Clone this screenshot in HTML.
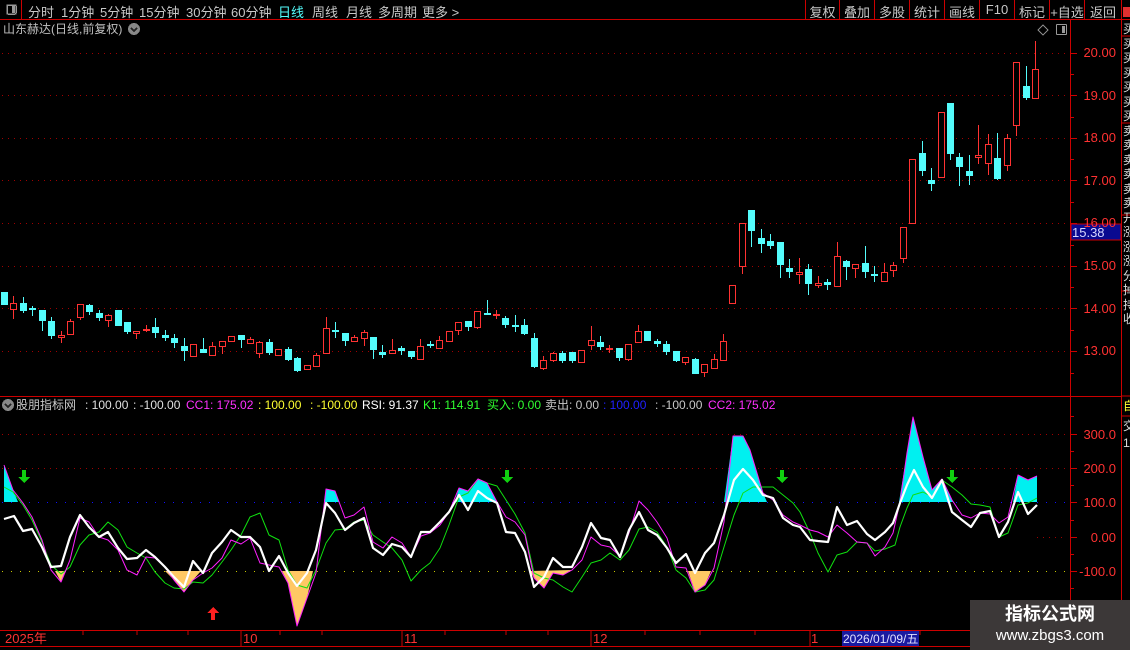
<!DOCTYPE html>
<html><head><meta charset="utf-8"><style>
body{margin:0;background:#000;width:1130px;height:650px;overflow:hidden;position:relative;font-family:"Liberation Sans","Noto Sans CJK SC",sans-serif;}
.t{position:absolute;white-space:nowrap;font-size:12px;line-height:14px}
.m{position:absolute;top:2px;font-size:13px;color:#c8c8c8;white-space:nowrap}
.b{position:absolute;top:2px;font-size:13px;color:#c8c8c8;text-align:center}
.pl{position:absolute;right:14px;font-size:13px;color:#ff3232;text-align:right}
</style></head><body>
<svg width="1130" height="650" style="position:absolute;left:0;top:0" shape-rendering="crispEdges">
<line x1="21.5" y1="0" x2="21.5" y2="19" stroke="#c00"/>
<rect x="7" y="5" width="9" height="9" fill="none" stroke="#999" stroke-width="1.5" rx="1"/>
<rect x="12" y="6" width="3" height="7" fill="#999"/>
<line x1="0" y1="19.5" x2="1130" y2="19.5" stroke="#c00"/>
<g stroke="#c00"><line x1="805.5" y1="0" x2="805.5" y2="19"/><line x1="839.5" y1="0" x2="839.5" y2="19"/><line x1="874.5" y1="0" x2="874.5" y2="19"/><line x1="909.5" y1="0" x2="909.5" y2="19"/><line x1="944.5" y1="0" x2="944.5" y2="19"/><line x1="979.5" y1="0" x2="979.5" y2="19"/><line x1="1014.5" y1="0" x2="1014.5" y2="19"/><line x1="1049.5" y1="0" x2="1049.5" y2="19"/><line x1="1084.5" y1="0" x2="1084.5" y2="19"/><line x1="1121.5" y1="0" x2="1121.5" y2="650"/></g>
<rect x="1123" y="7" width="7" height="10" fill="#e03030"/>
<line x1="1070.5" y1="20" x2="1070.5" y2="631" stroke="#c00"/>
<line x1="0" y1="396.5" x2="1121" y2="396.5" stroke="#c00"/>
<line x1="0" y1="630.5" x2="1121" y2="630.5" stroke="#c00"/>
<line x1="0" y1="646.5" x2="1121" y2="646.5" stroke="#c00"/>
<g stroke="#a00000" stroke-dasharray="1,5">
<line x1="2" y1="53.5" x2="1066" y2="53.5"/><line x1="2" y1="95.5" x2="1066" y2="95.5"/><line x1="2" y1="138.5" x2="1066" y2="138.5"/><line x1="2" y1="180.5" x2="1066" y2="180.5"/><line x1="2" y1="223.5" x2="1066" y2="223.5"/><line x1="2" y1="266.5" x2="1066" y2="266.5"/><line x1="2" y1="308.5" x2="1066" y2="308.5"/><line x1="2" y1="351.5" x2="1066" y2="351.5"/>
<line x1="2" y1="434.5" x2="1066" y2="434.5"/><line x1="2" y1="468.5" x2="1066" y2="468.5"/><line x1="1037" y1="537.5" x2="1066" y2="537.5"/>
</g>
<line x1="2" y1="502.5" x2="1066" y2="502.5" stroke="#1010ff" stroke-dasharray="1,8"/>
<line x1="2" y1="571.5" x2="1066" y2="571.5" stroke="#c8c800" stroke-dasharray="1,8"/>
<g stroke="#c00">
<path d="M1071 53.5h6M1071 95.5h6M1071 138.5h6M1071 180.5h6M1071 223.5h6M1071 266.5h6M1071 308.5h6M1071 351.5h6M1071 74.5h3M1071 117.5h3M1071 159.5h3M1071 202.5h3M1071 245.5h3M1071 287.5h3M1071 330.5h3M1071 373.5h3"/>
<path d="M1071 434.5h6M1071 468.5h6M1071 502.5h6M1071 537.5h6M1071 571.5h6M1071 451.5h3M1071 485.5h3M1071 520.5h3M1071 554.5h3M1071 588.5h3M1071 416.5h3M1071 605.5h3"/>
<path d="M83 631v4M137 631v4M188 631v4M241 631v15M280 631v4M322 631v4M402 631v15M445 631v4M506 631v4M548 631v4M591 631v15M645 631v4M700 631v4M755 631v4M810 631v15M870 631v4M920 631v4M1010 631v4"/>
</g>
<g stroke="#54fcfc" fill="none">
<path d="M4.5 292V305M23.5 297V313M32.5 306V316M42.5 310V331M51.5 317V339M89.5 304V315M99.5 310V321M118.5 310V326M127.5 322V334M155.5 318V338M165.5 330V341M174.5 334V348M184.5 338V361M203.5 338V353M241.5 335V348M269.5 339V355M288.5 347V361M297.5 357V372M335.5 322V338M345.5 333V346M373.5 337V359M382.5 345V358M401.5 346V355M411.5 351V359M430.5 341V348M468.5 321V331M487.5 300V314M505.5 316V328M515.5 315V332M524.5 319V335M534.5 333V368M562.5 351V363M572.5 352V363M600.5 336V350M619.5 348V361M647.5 331V341M657.5 339V347M666.5 341V355M676.5 351V362M695.5 358V374M751.5 210V247M761.5 229V253M770.5 234V249M780.5 242V278M789.5 259V278M808.5 264V295M827.5 279V290M846.5 260V280M865.5 246V278M874.5 266V282M922.5 141V176M931.5 168V191M950.5 103V160M959.5 153V186M969.5 155V185M997.5 133V180M1026.5 66V100"/>
</g>
<g fill="#54fcfc">
<rect x="1" y="292" width="7" height="13"/><rect x="20" y="303" width="7" height="8"/><rect x="29" y="308" width="7" height="2"/><rect x="39" y="310" width="7" height="11"/><rect x="48" y="321" width="7" height="15"/><rect x="86" y="305" width="7" height="7"/><rect x="96" y="313" width="7" height="5"/><rect x="115" y="310" width="7" height="16"/><rect x="124" y="322" width="7" height="10"/><rect x="152" y="327" width="7" height="6"/><rect x="162" y="335" width="7" height="3"/><rect x="171" y="338" width="7" height="5"/><rect x="181" y="346" width="7" height="5"/><rect x="200" y="349" width="7" height="4"/><rect x="238" y="335" width="7" height="5"/><rect x="266" y="342" width="7" height="11"/><rect x="285" y="349" width="7" height="11"/><rect x="294" y="358" width="7" height="13"/><rect x="332" y="330" width="7" height="2"/><rect x="342" y="333" width="7" height="8"/><rect x="370" y="337" width="7" height="13"/><rect x="379" y="352" width="7" height="3"/><rect x="398" y="348" width="7" height="3"/><rect x="408" y="351" width="7" height="6"/><rect x="427" y="344" width="7" height="2"/><rect x="465" y="321" width="7" height="6"/><rect x="484" y="313" width="7" height="2"/><rect x="502" y="318" width="7" height="7"/><rect x="512" y="325" width="7" height="2"/><rect x="521" y="325" width="7" height="9"/><rect x="531" y="338" width="7" height="29"/><rect x="559" y="353" width="7" height="8"/><rect x="569" y="352" width="7" height="9"/><rect x="597" y="342" width="7" height="5"/><rect x="616" y="348" width="7" height="10"/><rect x="644" y="331" width="7" height="10"/><rect x="654" y="341" width="7" height="3"/><rect x="663" y="344" width="7" height="8"/><rect x="673" y="351" width="7" height="10"/><rect x="692" y="359" width="7" height="15"/><rect x="748" y="210" width="7" height="21"/><rect x="758" y="238" width="7" height="6"/><rect x="767" y="241" width="7" height="5"/><rect x="777" y="242" width="7" height="23"/><rect x="786" y="268" width="7" height="4"/><rect x="805" y="269" width="7" height="15"/><rect x="824" y="282" width="7" height="3"/><rect x="843" y="261" width="7" height="6"/><rect x="862" y="263" width="7" height="9"/><rect x="871" y="274" width="7" height="2"/><rect x="919" y="153" width="7" height="18"/><rect x="928" y="180" width="7" height="4"/><rect x="947" y="103" width="7" height="51"/><rect x="956" y="157" width="7" height="10"/><rect x="966" y="171" width="7" height="5"/><rect x="994" y="158" width="7" height="21"/><rect x="1023" y="86" width="7" height="12"/>
</g>
<g stroke="#ff3232" fill="none">
<path d="M13.5 296V319M61.5 331V343M70.5 319V335M80.5 304V320M108.5 314V327M136.5 331V339M146.5 325V332M193.5 344V356M212.5 342V355M222.5 341V354M231.5 336V341M250.5 337V344M259.5 341V358M278.5 349V355M307.5 365V370M316.5 353V367M326.5 317V353M354.5 335V342M364.5 330V346M392.5 339V353M420.5 339V359M439.5 336V349M449.5 331V341M458.5 322V335M477.5 311V329M496.5 310V319M543.5 356V370M553.5 352V362M581.5 350V363M591.5 326V350M609.5 345V353M628.5 344V361M638.5 325V342M685.5 357V365M704.5 364V377M714.5 354V368M723.5 334V360M732.5 285V303M742.5 223V274M799.5 258V284M818.5 276V288M837.5 242V286M855.5 264V278M884.5 263V281M893.5 262V277M903.5 227V263M912.5 159V223M941.5 112V177M978.5 125V164M988.5 134V175M1007.5 134V171M1016.5 62V136M1035.5 41V98"/>
</g>
<g stroke="#ff3232" fill="#000">
<rect x="10.5" y="303.5" width="6" height="6"/><rect x="58.5" y="335.5" width="6" height="2"/><rect x="67.5" y="321.5" width="6" height="13"/><rect x="77.5" y="304.5" width="6" height="13"/><rect x="105.5" y="315.5" width="6" height="5"/><rect x="133.5" y="331.5" width="6" height="2"/><rect x="143.5" y="329.5" width="6" height="1"/><rect x="190.5" y="344.5" width="6" height="12"/><rect x="209.5" y="346.5" width="6" height="9"/><rect x="219.5" y="341.5" width="6" height="5"/><rect x="228.5" y="336.5" width="6" height="5"/><rect x="247.5" y="339.5" width="6" height="4"/><rect x="256.5" y="342.5" width="6" height="11"/><rect x="275.5" y="349.5" width="6" height="6"/><rect x="304.5" y="365.5" width="6" height="4"/><rect x="313.5" y="355.5" width="6" height="11"/><rect x="323.5" y="328.5" width="6" height="25"/><rect x="351.5" y="337.5" width="6" height="4"/><rect x="361.5" y="332.5" width="6" height="6"/><rect x="389.5" y="350.5" width="6" height="3"/><rect x="417.5" y="346.5" width="6" height="13"/><rect x="436.5" y="340.5" width="6" height="8"/><rect x="446.5" y="331.5" width="6" height="10"/><rect x="455.5" y="322.5" width="6" height="8"/><rect x="474.5" y="311.5" width="6" height="16"/><rect x="493.5" y="314.5" width="6" height="1"/><rect x="540.5" y="360.5" width="6" height="8"/><rect x="550.5" y="353.5" width="6" height="7"/><rect x="578.5" y="350.5" width="6" height="12"/><rect x="588.5" y="340.5" width="6" height="5"/><rect x="606.5" y="348.5" width="6" height="1"/><rect x="625.5" y="344.5" width="6" height="15"/><rect x="635.5" y="331.5" width="6" height="11"/><rect x="682.5" y="357.5" width="6" height="5"/><rect x="701.5" y="364.5" width="6" height="8"/><rect x="711.5" y="359.5" width="6" height="9"/><rect x="720.5" y="341.5" width="6" height="19"/><rect x="729.5" y="285.5" width="6" height="18"/><rect x="739.5" y="223.5" width="6" height="43"/><rect x="796.5" y="272.5" width="6" height="2"/><rect x="815.5" y="283.5" width="6" height="2"/><rect x="834.5" y="256.5" width="6" height="30"/><rect x="852.5" y="264.5" width="6" height="4"/><rect x="881.5" y="272.5" width="6" height="9"/><rect x="890.5" y="265.5" width="6" height="5"/><rect x="900.5" y="227.5" width="6" height="31"/><rect x="909.5" y="159.5" width="6" height="64"/><rect x="938.5" y="112.5" width="6" height="65"/><rect x="975.5" y="155.5" width="6" height="2"/><rect x="985.5" y="144.5" width="6" height="19"/><rect x="1004.5" y="138.5" width="6" height="27"/><rect x="1013.5" y="62.5" width="6" height="63"/><rect x="1032.5" y="69.5" width="6" height="29"/>
</g>
<g fill="#00f0f0" shape-rendering="auto">
<polygon points="4,502 4,465 13,490 18,502"/>
<polygon points="324,502 326,489 335,491 339,502"/>
<polygon points="455,502 459,488 468,491 478,479 487,483 497,502"/>
<polygon points="724,502 727,480 733,436 743,436 750,450 763,493 767,502"/>
<polygon points="899,502 907,453 913,417 923,457 932,490 942,479 953,502"/>
<polygon points="1013,502 1018,475 1028,480 1037,476 1037,502"/>
</g>
<g fill="#ffc864" shape-rendering="auto">
<polygon points="55,571 61,582 66,571"/>
<polygon points="165,571 174,580 184,592 193,580 201,571"/>
<polygon points="282,571 288,583 297,626 307,598 313,571"/>
<polygon points="530,571 534,578 544,588 553,573 563,575 572,570"/>
<polygon points="688,571 695,592 705,585 711,571"/>
</g>
<g fill="none" shape-rendering="auto" stroke-linejoin="round">
<polyline stroke="#10e010" stroke-width="1" points="4,487 13,492 23,505 32,520 42,542 51,565 61,574 70,567 80,545 89,535 99,532 108,522 118,530 127,547 137,553 146,558 155,572 165,583 174,588 184,589 193,582 203,583 212,575 222,562 231,550 241,535 250,517 260,513 269,535 279,540 288,570 297,585 307,588 316,570 326,543 335,530 345,529 354,522 364,520 373,535 383,542 392,548 402,560 411,581 421,570 430,563 440,548 449,525 459,497 468,493 478,479 487,483 497,486 506,500 515,514 525,533 534,573 544,578 553,580 563,587 572,592 582,577 591,563 601,560 610,553 620,560 629,550 639,529 648,527 657,532 667,547 676,570 686,578 695,592 705,590 714,580 724,547 734,515 743,493 753,487 763,487 773,487 783,495 793,503 800,512 810,533 818,553 828,572 837,555 847,552 857,542 867,543 875,551 885,549 895,545 900,527 907,508 913,495 923,492 932,497 942,480 952,487 962,495 971,504 980,505 990,507 999,537 1008,533 1018,505 1028,503 1037,498"/>
<polyline stroke="#ff20ff" stroke-width="1" points="4,465 13,490 23,503 32,517 42,540 51,570 61,582 70,560 80,518 89,522 99,537 108,540 118,550 127,570 137,575 146,557 155,558 165,567 174,580 184,592 193,580 203,573 212,568 222,558 231,540 241,544 250,538 260,563 269,565 279,567 288,583 297,626 307,598 316,573 326,489 335,491 345,518 354,515 364,507 373,542 383,548 392,537 402,543 411,557 421,536 430,533 440,525 449,512 459,488 468,491 478,479 487,483 497,502 506,517 515,522 525,535 534,578 544,588 553,573 563,575 572,570 582,560 591,537 601,545 610,547 620,556 629,533 639,501 648,510 657,522 667,538 676,567 686,568 695,592 705,585 714,568 724,522 733,436 743,436 750,450 763,493 773,500 783,515 793,522 800,525 810,530 818,532 828,537 837,525 847,533 857,542 867,543 875,556 885,547 893,533 900,502 907,453 913,417 923,457 932,490 942,479 952,500 962,515 971,518 980,513 990,514 999,523 1008,517 1018,475 1028,480 1037,476"/>
<polyline stroke="#ffffff" stroke-width="2.2" points="4,519 14,516 23,531 32,529 42,547 51,567 61,566 70,537 80,515 89,527 99,537 108,532 118,548 127,559 137,558 146,550 155,557 165,567 174,577 184,587 193,561 203,573 212,553 222,542 231,530 241,537 250,537 260,547 269,571 279,556 288,573 297,586 307,573 316,550 326,503 335,513 345,530 354,523 364,518 373,548 383,555 392,544 402,547 411,557 421,532 430,532 440,522 449,512 459,495 468,510 478,491 487,498 497,503 506,532 515,533 525,552 534,587 544,577 553,558 563,567 572,567 582,547 591,523 601,538 610,540 620,557 629,530 639,512 648,530 657,535 667,548 676,563 686,554 695,573 705,553 714,543 724,515 734,480 743,469 753,480 763,495 773,498 783,518 793,525 800,527 810,540 818,541 828,542 837,507 847,525 857,521 867,534 875,540 885,532 893,523 900,503 907,485 914,470 923,487 932,498 942,480 952,512 962,520 971,527 980,513 990,511 999,537 1008,522 1018,492 1028,514 1037,505"/>
</g>
<g fill="#10d010">
<path d="M22 470h4v7h4l-6 6-6-6h4z"/><path d="M505 470h4v7h4l-6 6-6-6h4z"/><path d="M780 470h4v7h4l-6 6-6-6h4z"/><path d="M950 470h4v7h4l-6 6-6-6h4z"/>
</g>
<path d="M211 620h4v-7h4l-6-6-6 6h4z" fill="#ff2020"/>
<rect x="1071" y="224" width="50" height="16" fill="#0a0a90" stroke="#c00"/>
<rect x="842" y="631" width="77" height="15" fill="#1a1aa0"/>
<circle cx="134" cy="29" r="6" fill="#888"/><path d="M131 28l3 3 3-3" stroke="#222" stroke-width="1.5" fill="none"/>
<circle cx="8" cy="405" r="6" fill="#888"/><path d="M5 404l3 3 3-3" stroke="#222" stroke-width="1.5" fill="none"/>
<path d="M1043 25l5 5-5 5-5-5z" fill="none" stroke="#888"/>
<rect x="1056.5" y="24.5" width="10" height="10" fill="none" stroke="#999" rx="1"/><rect x="1062" y="26" width="3" height="7" fill="#999"/>
<g stroke="#c00"><path d="M1122 36h8M1122 123h8M1122 215h8M1122 291h8M1122 396h8M1122 416h8"/></g>
<rect x="970" y="600" width="160" height="50" fill="#3c3838"/>
</svg>

<div class="m" style="left:28px">分时</div>
<div class="m" style="left:61px">1分钟</div>
<div class="m" style="left:100px">5分钟</div>
<div class="m" style="left:139px">15分钟</div>
<div class="m" style="left:186px">30分钟</div>
<div class="m" style="left:231px">60分钟</div>
<div class="m" style="left:278px;color:#54fcfc">日线</div>
<div class="m" style="left:312px">周线</div>
<div class="m" style="left:346px">月线</div>
<div class="m" style="left:378px">多周期</div>
<div class="m" style="left:422px">更多 &gt;</div>

<div class="b" style="left:806px;width:33px">复权</div>
<div class="b" style="left:840px;width:34px">叠加</div>
<div class="b" style="left:875px;width:34px">多股</div>
<div class="b" style="left:910px;width:34px">统计</div>
<div class="b" style="left:945px;width:34px">画线</div>
<div class="b" style="left:980px;width:34px">F10</div>
<div class="b" style="left:1015px;width:34px">标记</div>
<div class="b" style="left:1050px;width:34px">+自选</div>
<div class="b" style="left:1085px;width:36px">返回</div>

<div class="t" style="left:3px;top:22px;font-size:12px;color:#c0c0c0">山东赫达(日线,前复权)</div>

<div class="pl" style="top:45px">20.00</div>
<div class="pl" style="top:88px">19.00</div>
<div class="pl" style="top:130px">18.00</div>
<div class="pl" style="top:173px">17.00</div>
<div class="pl" style="top:215px">16.00</div>
<div class="pl" style="top:258px">15.00</div>
<div class="pl" style="top:301px">14.00</div>
<div class="pl" style="top:343px">13.00</div>
<div class="t" style="left:1072px;top:226px;font-size:13px;color:#d8d8ff">15.38</div>

<div class="pl" style="top:427px">300.0</div>
<div class="pl" style="top:461px">200.0</div>
<div class="pl" style="top:495px">100.0</div>
<div class="pl" style="top:530px">0.00</div>
<div class="pl" style="top:564px">-100.0</div>

<div class="t" style="left:16px;top:398px;color:#c8c8c8">股朋指标网</div>
<div class="t" style="left:85px;top:398px;color:#e0e0e0">: 100.00</div>
<div class="t" style="left:133px;top:398px;color:#e0e0e0">: -100.00</div>
<div class="t" style="left:186px;top:398px;color:#ff30ff">CC1: 175.02</div>
<div class="t" style="left:258px;top:398px;color:#ffff30">: 100.00</div>
<div class="t" style="left:310px;top:398px;color:#ffff30">: -100.00</div>
<div class="t" style="left:362px;top:398px;color:#ffffff">RSI: 91.37</div>
<div class="t" style="left:423px;top:398px;color:#30ff30">K1: 114.91</div>
<div class="t" style="left:487px;top:398px;color:#30ff30">买入: 0.00</div>
<div class="t" style="left:545px;top:398px;color:#c8c8c8">卖出: 0.00</div>
<div class="t" style="left:603px;top:398px;color:#2020ff">: 100.00</div>
<div class="t" style="left:655px;top:398px;color:#c8c8c8">: -100.00</div>
<div class="t" style="left:708px;top:398px;color:#ff30ff">CC2: 175.02</div>

<div class="t" style="left:5px;top:632px;font-size:13px;color:#ff3232">2025年</div>
<div class="t" style="left:243px;top:632px;font-size:13px;color:#ff3232">10</div>
<div class="t" style="left:404px;top:632px;font-size:13px;color:#ff3232">11</div>
<div class="t" style="left:593px;top:632px;font-size:13px;color:#ff3232">12</div>
<div class="t" style="left:811px;top:632px;font-size:13px;color:#ff3232">1</div>
<div class="t" style="left:843px;top:632px;font-size:12px;color:#e0e0ff">2026/01/09/五</div>

<div class="t" style="left:1123px;top:22px;width:7px;overflow:hidden;font-size:12px;line-height:14.5px;color:#ddd;white-space:normal">买买买买买买买卖卖卖卖卖卖开涨涨涨分掉持收</div>
<div class="t" style="left:1123px;top:399px;width:7px;overflow:hidden;color:#ffff30">自</div>
<div class="t" style="left:1123px;top:418px;width:7px;overflow:hidden;font-size:12px;line-height:17px;color:#ddd;white-space:normal">交1111111111</div>

<div class="t" style="left:970px;top:603px;width:160px;text-align:center;font-size:18px;line-height:22px;font-weight:bold;color:#fff">指标公式网</div>
<div class="t" style="left:970px;top:627px;width:160px;text-align:center;font-size:15px;line-height:18px;color:#fff">www.zbgs3.com</div>
</body></html>
